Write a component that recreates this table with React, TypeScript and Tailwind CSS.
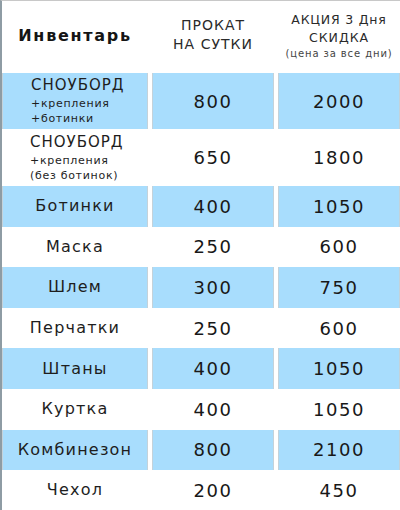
import React from 'react';

interface Row {
  name: React.ReactNode;
  day: string;
  promo: string;
  tall?: boolean;
}

const rows: Row[] = [
  {
    name: (
      <div className="flex flex-col items-start leading-none">
        <span className="text-[15px] tracking-[1px]">СНОУБОРД</span>
        <span className="mt-[5px] text-[11px] tracking-[0.7px]">+крепления</span>
        <span className="mt-[4px] text-[11px] tracking-[0.7px]">+ботинки</span>
      </div>
    ),
    day: '800',
    promo: '2000',
    tall: true,
  },
  {
    name: (
      <div className="flex flex-col items-start leading-none">
        <span className="text-[15px] tracking-[1px]">СНОУБОРД</span>
        <span className="mt-[5px] text-[11px] tracking-[0.7px]">+крепления</span>
        <span className="mt-[4px] text-[11px] tracking-[0.7px]">(без ботинок)</span>
      </div>
    ),
    day: '650',
    promo: '1800',
    tall: true,
  },
  { name: 'Ботинки', day: '400', promo: '1050' },
  { name: 'Маска', day: '250', promo: '600' },
  { name: 'Шлем', day: '300', promo: '750' },
  { name: 'Перчатки', day: '250', promo: '600' },
  { name: 'Штаны', day: '400', promo: '1050' },
  { name: 'Куртка', day: '400', promo: '1050' },
  { name: 'Комбинезон', day: '800', promo: '2100' },
  { name: 'Чехол', day: '200', promo: '450' },
];

const cellBase = 'flex items-center justify-center';

export default function App() {
  return (
    <div
      className="w-[400px] h-[510px] bg-white border-l-2 border-t border-l-[#8e9ca4] border-t-[#c8c8c8] flex flex-col text-[#1e1e1e] overflow-hidden"
      style={{ fontFamily: '"DejaVu Sans", Verdana, sans-serif' }}
    >
      {/* header */}
      <div className="grid grid-cols-[146px_122px_122px] gap-x-[4px] h-[72px] shrink-0">
        <div className={`${cellBase} font-bold text-[16px] tracking-[1.7px] pb-[2px] text-[#151515]`}>Инвентарь</div>
        <div className={`${cellBase} flex-col text-[14px] tracking-[1px] leading-[19px] text-[#2a2a2a] pb-[4px]`}>
          <span>ПРОКАТ</span>
          <span>НА СУТКИ</span>
        </div>
        <div className={`${cellBase} flex-col text-[#2a2a2a] pb-[3px]`}>
          <span className="text-[12.5px] tracking-[0.8px] leading-[18px]">АКЦИЯ 3 Дня</span>
          <span className="text-[12.5px] tracking-[1px] leading-[18px]">СКИДКА</span>
          <span className="text-[10px] tracking-[0.9px] leading-[14px] text-[#444]">(цена за все дни)</span>
        </div>
      </div>

      {rows.map((row, i) => {
        const blue = i % 2 === 0;
        const bg = blue ? 'bg-[#a8ddfd] border-x border-x-[#c4d2da]' : '';
        return (
          <div
            key={i}
            className={`grid grid-cols-[146px_122px_122px] gap-x-[4px] ${
              row.tall ? (i === 0 ? 'h-[56px]' : 'h-[57px]') : 'h-[40.6px]'
            } shrink-0`}
          >
            <div className={`${cellBase} ${bg} ${row.tall ? 'justify-start pl-[28px]' : 'text-[16px] tracking-[1.2px]'}`}>
              {row.name}
            </div>
            <div className={`${cellBase} ${bg} text-[18px] tracking-[1.6px] text-[#181818]`}>{row.day}</div>
            <div className={`${cellBase} ${bg} text-[18px] tracking-[1.6px] text-[#181818]`}>{row.promo}</div>
          </div>
        );
      })}
    </div>
  );
}
